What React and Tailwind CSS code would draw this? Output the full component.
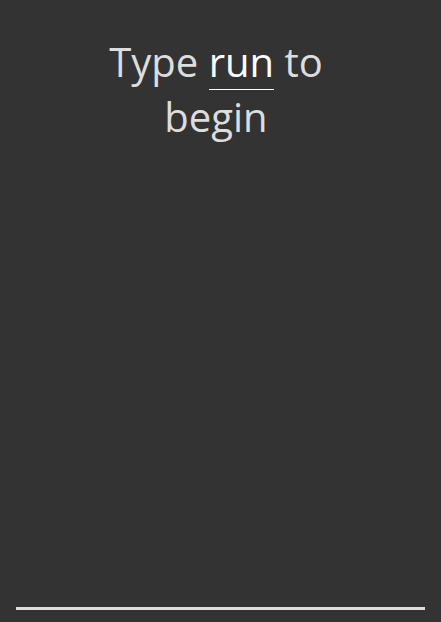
export default function App() {
  return (
    <div className="flex flex-col h-[622px] bg-[#333333] font-['Open_Sans',sans-serif] text-[#dddddd]">
      <div className="flex-1 flex justify-center pt-[34px] pr-[9px]">
        <h1 className="w-[260px] text-center text-[40px] leading-[55px] font-normal">
          Type <span className="text-white border-b border-white">run</span> to begin
        </h1>
      </div>
      <div className="px-4 pb-[12px]">
        <div className="h-[3px] bg-[#dddddd]" />
      </div>
    </div>
  );
}
